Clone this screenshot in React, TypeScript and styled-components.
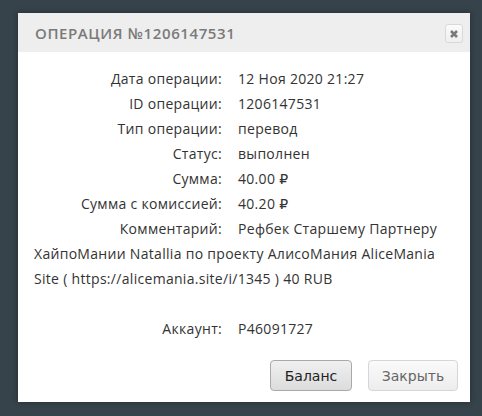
import React from "react";
import styled, { createGlobalStyle } from "styled-components";

const Global = createGlobalStyle`
  html, body { margin: 0; padding: 0; }
  body {
    background: #36434b;
    width: 482px;
    height: 416px;
    overflow: hidden;
    font-family: "Open Sans", "DejaVu Sans", sans-serif;
  }
`;

const Page = styled.div`
  padding: 13px 12px 0 18px;
`;

const Dialog = styled.div`
  width: 452px;
  height: 389px;
  background: #ffffff;
  display: flex;
  flex-direction: column;
  box-shadow: 0 0 6px rgba(0, 0, 0, 0.35);
`;

const Header = styled.div`
  height: 39px;
  background: #eeeeee;
  display: flex;
  align-items: center;
  justify-content: space-between;
  padding: 0 7px 0 17px;
`;

const Title = styled.div`
  font-family: "Open Sans", sans-serif;
  font-weight: 600;
  font-size: 15px;
  letter-spacing: 0.6px;
  color: #7a7a7a;
  text-transform: uppercase;
`;

const CloseBtn = styled.button`
  width: 18px;
  height: 19px;
  padding: 0;
  border: 1px solid #d9d9d9;
  border-radius: 3px;
  background: linear-gradient(#fbfbfb, #efefef);
  display: flex;
  align-items: center;
  justify-content: center;
  margin-top: 2px;
`;

const Body = styled.div`
  padding: 14px 12px 0 16px;
  font-size: 14px;
  line-height: 25px;
  letter-spacing: 0.3px;
  color: #333333;
  flex: 1;
`;

const Row = styled.div<{ $gap?: boolean }>`
  margin-top: ${(p) => (p.$gap ? "25px" : "0")};
`;

const Label = styled.span`
  display: inline-block;
  width: 188px;
  text-align: right;
  margin-right: 16px;
  color: #333333;
`;

const Value = styled.span`
  color: #333333;
`;

const Footer = styled.div`
  display: flex;
  justify-content: flex-end;
  gap: 16px;
  padding: 0 12px 11px 0;
`;

const Button = styled.button<{ $primary?: boolean }>`
  box-sizing: border-box;
  height: 31px;
  padding: 0;
  width: ${(p) => (p.$primary ? "82px" : "90px")};
  font-family: "DejaVu Sans", Verdana, sans-serif;
  font-size: 14px;
  border-radius: 4px;
  border: 1px solid ${(p) => (p.$primary ? "#a9a9a9" : "#d6d6d6")};
  color: ${(p) => (p.$primary ? "#222222" : "#666666")};
  background: ${(p) =>
    p.$primary
      ? "linear-gradient(#f0f0f0, #dcdcdc)"
      : "linear-gradient(#fafafa, #ededed)"};
`;

const rows: [string, string][] = [
  ["Дата операции:", "12 Ноя 2020 21:27"],
  ["ID операции:", "1206147531"],
  ["Тип операции:", "перевод"],
  ["Статус:", "выполнен"],
  ["Сумма:", "40.00 ₽"],
  ["Сумма с комиссией:", "40.20 ₽"],
  [
    "Комментарий:",
    "Рефбек Старшему Партнеру ХайпоМании Natallia по проекту АлисоМания AliceMania Site ( https://alicemania.site/i/1345 ) 40 RUB",
  ],
];

export default function App() {
  return (
    <>
      <Global />
      <Page>
        <Dialog>
          <Header>
            <Title>Операция №1206147531</Title>
            <CloseBtn aria-label="close">
              <svg width="10" height="10" viewBox="0 0 10 10">
                <path
                  d="M2 2 L8 8 M8 2 L2 8"
                  stroke="#7a7a7a"
                  strokeWidth="2.6"
                  strokeLinecap="butt"
                />
              </svg>
            </CloseBtn>
          </Header>
          <Body>
            {rows.map(([l, v]) => (
              <Row key={l}>
                <Label>{l}</Label>
                <Value>{v}</Value>
              </Row>
            ))}
            <Row $gap>
              <Label>Аккаунт:</Label>
              <Value>P46091727</Value>
            </Row>
          </Body>
          <Footer>
            <Button $primary>Баланс</Button>
            <Button>Закрыть</Button>
          </Footer>
        </Dialog>
      </Page>
    </>
  );
}
